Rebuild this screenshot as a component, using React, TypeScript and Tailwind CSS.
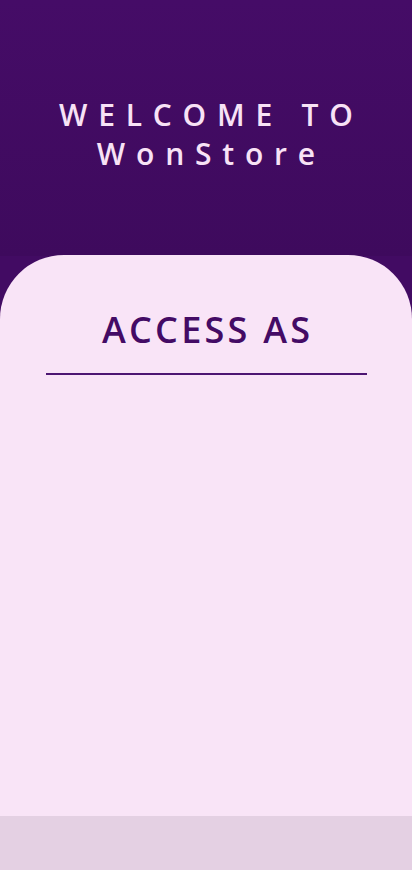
export default function App() {
  return (
    <div className="h-[870px] w-full flex flex-col bg-[#420b63] font-['Open_Sans',sans-serif]">
      {/* Header */}
      <div className="h-[256px] shrink-0 flex flex-col items-center bg-gradient-to-b from-[#450c67] to-[#3e0a5d] pt-[95px]">
        <h1 className="text-center text-[30px] leading-[39px] font-semibold tracking-[0.36em] text-[#f8e2f6] pl-[0.36em]">
          WELCOME TO
          <br />
          WonStore
        </h1>
      </div>

      {/* Card */}
      <div className="flex-1 bg-[#f9e4f7] rounded-t-[64px] flex flex-col items-center pt-[49px] -mt-px">
        <h2 className="text-[36px] leading-[52px] font-semibold tracking-[0.09em] pl-[0.09em] text-[#440b65]">ACCESS AS</h2>
        <div className="mt-[17px] w-[321px] h-[2px] bg-[#4d1572]" />
      </div>

      {/* Bottom bar */}
      <div className="h-[54px] shrink-0 bg-[#e4d0e3]" />
    </div>
  )
}
